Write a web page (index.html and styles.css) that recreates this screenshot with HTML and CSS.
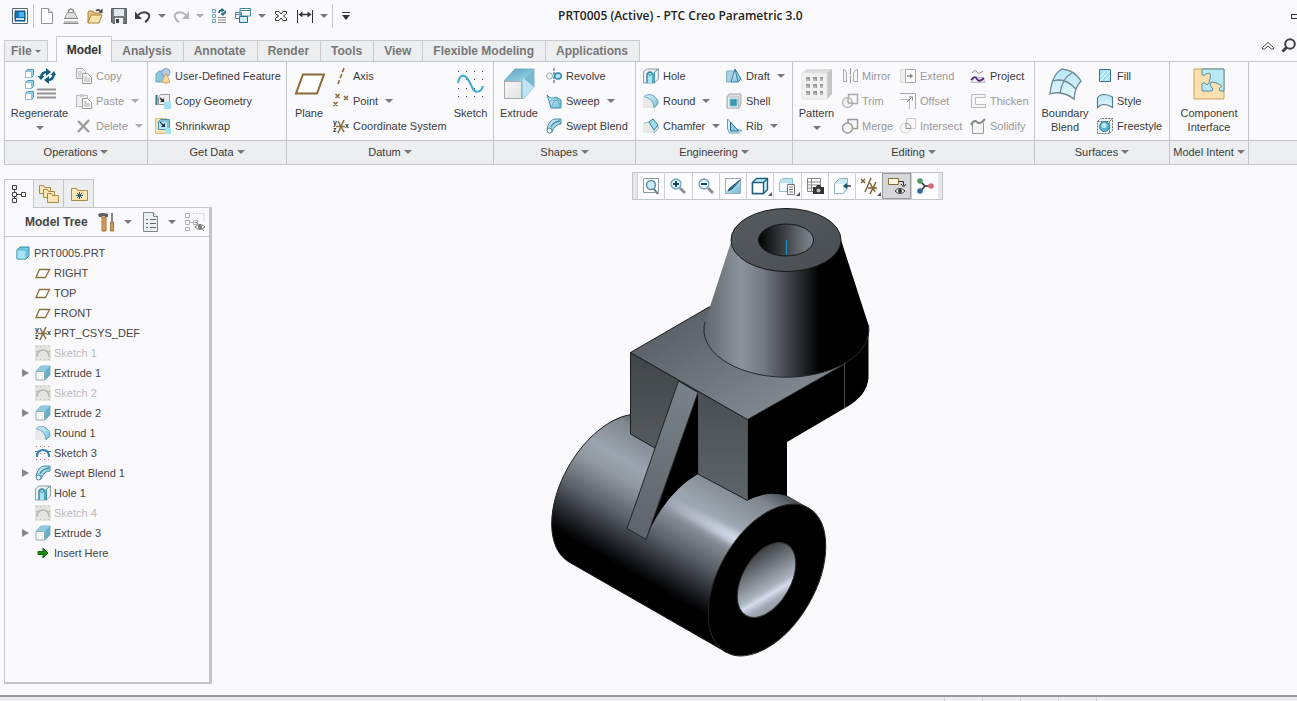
FILE: index.html
```html
<!DOCTYPE html>
<html lang="en">
<head>
    <meta charset="UTF-8">
    <meta name="viewport" content="width=device-width, initial-scale=1.0">
    <title>PRT0005 (Active) - PTC Creo Parametric 3.0</title>
    <link rel="stylesheet" href="styles.css">
</head>
<body>
    <!-- icon sprite -->
    <svg class="sprite" aria-hidden="true">
        <defs>
            <linearGradient id="gBlue" x1="0" y1="0" x2="1" y2="1">
                <stop offset="0" stop-color="#e4f5fb"/><stop offset="1" stop-color="#6cbcd8"/>
            </linearGradient>
            <linearGradient id="gSide" x1="0" y1="0" x2="1" y2="1">
                <stop offset="0" stop-color="#2e86ab"/><stop offset="1" stop-color="#a9dcee"/>
            </linearGradient>
            <linearGradient id="gFace" x1="0" y1="0" x2="1" y2="1">
                <stop offset="0" stop-color="#f8f8f8"/><stop offset="1" stop-color="#e2e2e2"/>
            </linearGradient>
            <linearGradient id="gSky" x1="0" y1="0" x2="0" y2="1">
                <stop offset="0" stop-color="#b5e6f6"/><stop offset="1" stop-color="#e8f8fd"/>
            </linearGradient>
        </defs>
        <!-- quick access -->
        <symbol id="app" viewBox="0 0 16 16"><path d="M.5.5h15v15H.5z" fill="#fff" stroke="#567"/><path d="M3 3h10v10H3z" fill="#1976b5" stroke="#124a72"/><path d="M7 4h5v5H7z" fill="#49b5ef"/><path d="M4 10h8v2H4z" fill="#cde"/></symbol>
        <symbol id="new" viewBox="0 0 16 16"><path d="M2.500.5h7l4 4v11h-11z" fill="#fff" stroke="#8d9398"/><path d="M9.500.5v4h4" fill="#ddd" stroke="#8d9398"/></symbol>
        <symbol id="scale" viewBox="0 0 16 16"><path d="M4.500 4.500h7l3 6h-13z" fill="#ddd" stroke="#999"/><path d="M5.500 4.500v-2q2.500-3 5 0v2" fill="none" stroke="#888" stroke-width="1.500"/><path d="M1 10.500h14M.5 15.500h15M2 13v2M4 13v2M6 13v2M8 13v2M10 13v2M12 13v2M14 13v2" stroke="#888" fill="none"/></symbol>
        <symbol id="open" viewBox="0 0 16 16"><path d="M1 15V4l1-1h4l1 2h6v3" fill="#e9c57c" stroke="#a98440"/><path d="M1 15l3-8h11l-3 8z" fill="#fbe3ad" stroke="#a98440"/><path d="M9 3q2-2 4-.5" fill="none" stroke="#444" stroke-width="1.500"/><path d="M15.500.5v5l-4-1.500z" fill="#444"/></symbol>
        <symbol id="save" viewBox="0 0 16 16"><path d="M.5.5h15v15H2l-1.500-1.500z" fill="#737a80" stroke="#5b6064"/><path d="M3 1h10v7H3z" fill="#dfe9ee"/><path d="M4 10h8v6H4z" fill="#f1f1f1"/><path d="M5 11h3v4H5z" fill="#3d4144"/></symbol>
        <symbol id="undo" viewBox="0 0 16 16"><path d="M3 7q5-4 9-2t1 6q-1 2-3 3" fill="none" stroke="#3c3f43" stroke-width="2"/><path d="M0 3.500V11h7z" fill="#3c3f43"/></symbol>
        <symbol id="redo" viewBox="0 0 16 16"><path d="M13 7q-5-4-9-2t-1 6q1 2 3 3" fill="none" stroke="#b3b5b7" stroke-width="2"/><path d="M16 3.500V11H9z" fill="#b3b5b7"/></symbol>
        <symbol id="regen" viewBox="0 0 16 16"><path d="M1.500 1.500h3v3h-3zM1.500 6.500h3v3h-3zM1.500 11.500h3v3h-3z" fill="#e1f4fa" stroke="#6ba3ba"/><path d="M7 9.500h8M7 12h8M7 14.500h8" stroke="#888"/><path d="M8 5q0-3 3-3M14 2.500q1 3-2 3.500" fill="none" stroke="#176080" stroke-width="1.600"/><path d="M10.500 0v4.500L13.500 2zM12.500 4v4L9.500 6z" fill="#176080"/></symbol>
        <symbol id="windows" viewBox="0 0 16 16"><path d="M5 .5h10.500V8H5zM.5 4.500h6v6h-6z" fill="#fff" stroke="#4489a4"/><path d="M5 2.500h10.500M.5 6.500h6" stroke="#4489a4"/><path d="M4.500 8.500h8v6h-8z" fill="#cfeefa" stroke="#276f91"/></symbol>
        <symbol id="closewin" viewBox="0 0 16 16"><path d="M2.500 3.500h3.500L8 6l2-2.500h3.500v2L10.500 8l3 2.500v2H10L8 10l-2 2.500H2.500v-2l3-2.500-3-2.500z" fill="#fff" stroke="#333"/></symbol>
        <symbol id="measure" viewBox="0 0 16 16"><path d="M.5 2v13M15.500 2v13" stroke="#333"/><path d="M3 6.500h10" stroke="#333" stroke-width="1.500"/><path d="M1.500 6.500l4-3v6zM14.500 6.500l-4-3v6z" fill="#333"/></symbol>
        <symbol id="more" viewBox="0 0 16 16"><path d="M4 4.500h8" stroke="#333"/><path d="M4 7h8l-4 5z" fill="#333"/></symbol>
        <!-- operations -->
        <symbol id="bigRegen" viewBox="0 0 32 32"><g fill="#8fd3e8" stroke="#4c9ab8"><path d="M1.500 3.500l2-2h6v6l-2 2h-6zM1.500 14.500l2-2h6v6l-2 2h-6zM1.500 25.500l2-2h6v6l-2 2h-6z"/><path d="M1.500 3.500h6v6h-6zM1.500 14.500h6v6h-6zM1.500 25.500h6v6h-6z" fill="#fff" stroke="#8cc2d6"/></g><path d="M13 21.500h19M13 25.500h19M13 29.500h19" stroke="#939393" stroke-width="2"/><path d="M17 9q1-5 6-5M30 6q-1 6-6 6" fill="none" stroke="#165e7d" stroke-width="2.500"/><path d="M13.500 8h7L17 12zM26.500 7L30 3l2 4zM22 0l5 4-5 4zM25 8v8l-5-4z" fill="#165e7d"/></symbol>
        <symbol id="copy" viewBox="0 0 16 16"><path d="M.5.5h6l3 3v7h-9z" fill="#f2f2f2" stroke="#aaa"/><path d="M6.500 5.500h5l4 4v6h-9z" fill="#f6f6f6" stroke="#999"/><path d="M2 4h4M2 6h3M2 8h3M8 9h3M8 11h6M8 13h6" stroke="#b5b5b5"/></symbol>
        <symbol id="paste" viewBox="0 0 16 16"><path d="M.5 2.500h11v11H.5z" fill="#eee" stroke="#bbb"/><path d="M4 1h4v3H4z" fill="#ccc"/><path d="M6.500 5.500h5l4 4v6h-9z" fill="#fafafa" stroke="#999"/><path d="M8 9h3M8 11h6M8 13h6" stroke="#aaa"/></symbol>
        <symbol id="delete" viewBox="0 0 16 16"><path d="M2 3l11 11M13 2L2 14" stroke="#9b9b9b" stroke-width="2.400"/></symbol>
        <!-- get data -->
        <symbol id="udf" viewBox="0 0 16 16"><path d="M1 6l3-3h6v8l-3 3H1z" fill="#86c7de" stroke="#6ba9c1"/><circle cx="11" cy="4.500" r="4" fill="#b9ccef" stroke="#7f99ca"/><path d="M11 5l4 9q-4 2.500-8 0z" fill="#f9d69a" stroke="#cba469"/></symbol>
        <symbol id="copygeom" viewBox="0 0 16 16"><path d="M3.500 4.500l2-3h9v7l-3 3h-8z" fill="#eee" stroke="#999"/><path d="M1.500 2v10" stroke="#34758f" stroke-width="2"/><path d="M9 9h7v7H9z" fill="#9fe2f5"/><path d="M5 5l3 3" stroke="#222" stroke-width="1.300"/><path d="M9 5v4H5z" fill="#222"/></symbol>
        <symbol id="shrink" viewBox="0 0 16 16"><path d="M.5.5h11v15H.5z" fill="#f6e3b5" stroke="#d5bd82"/><path d="M3.500 3.500l2-2h9v8l-2 2h-9z" fill="#7fc4dc" stroke="#4a93b1"/><path d="M4 4h8v7H4z" fill="#c5e8f3"/><path d="M10 10h6v6h-6z" fill="#9fe2f5"/><path d="M5 4l4 4" stroke="#12394a" stroke-width="1.300"/><path d="M10 5v4H6z" fill="#12394a"/></symbol>
        <!-- datum -->
        <symbol id="bigPlane" viewBox="0 0 32 32"><path d="M10 6.500h21l-7 19H3z" fill="#fff" stroke="#8a6a37" stroke-width="2"/></symbol>
        <symbol id="plane" viewBox="0 0 16 16"><path d="M4.500 4.500h10l-4 8H1z" fill="#fff" stroke="#8a6f43" stroke-width="1.300"/></symbol>
        <symbol id="axis" viewBox="0 0 16 16"><path d="M11 0L5 16" stroke="#8a6a37" stroke-width="1.600" stroke-dasharray="4.500 2"/></symbol>
        <symbol id="point" viewBox="0 0 16 16"><path d="M2.500 1l4 4M6.500 1l-4 4M11 3l4 4M15 3l-4 4M.5 9l4 4M4.500 9l-4 4" stroke="#8a6a37" stroke-width="1.500"/></symbol>
        <symbol id="csys" viewBox="0 0 16 16"><path d="M3 8.500h9M5 3l6 11M11 2L5 15" stroke="#8a6a37" stroke-width="1.500"/><g font-family="Liberation Sans" font-size="7" font-weight="bold" fill="#333"><text x="0" y="7">y</text><text x="12" y="10">x</text><text x="0" y="14">z</text></g></symbol>
        <symbol id="bigSketch" viewBox="0 0 32 32"><path d="M3 3.500h26M3 11.500h26M3 20.500h26M3 28.500h26" stroke="#555" stroke-dasharray="1 7"/><path d="M3 15c1-7 5-9 8-6s5 8 7 12 8 4 10-3" fill="none" stroke="#3ea9cf" stroke-width="2"/></symbol>
        <symbol id="sketch" viewBox="0 0 16 16"><path d="M1 1.500h15M1 14.500h15M1 8.500h15" stroke="#c77" stroke-dasharray="1 3"/><path d="M2 12q0-7 6-7t6 7" fill="none" stroke="#2f86b5" stroke-width="2"/><path d="M0 6.500h5M11 6.500h5" stroke="#2f86b5"/></symbol>
        <symbol id="sketchOff" viewBox="0 0 16 16"><path d="M0 0h16v16H0z" fill="#e4e4e0"/><path d="M1 1.500h15M1 14.500h15" stroke="#bbb" stroke-dasharray="1 3"/><path d="M2 12q0-7 6-7t6 7M1 6.500h4M11 6.500h4" fill="none" stroke="#b9b9b4" stroke-width="1.500"/></symbol>
        <!-- shapes -->
        <symbol id="bigExtrude" viewBox="0 0 32 32"><path d="M1 13L12 1h19v18L20 31z" fill="url(#gBlue)" stroke="#83b6c9"/><path d="M12 1h19L20 13H1z" fill="url(#gSide)" opacity=".75"/><path d="M31 1v18L20 31V13z" fill="#78b7d0"/><path d="M31 19L20 10v21z" fill="#c1e4f0"/><path d="M1.500 13.500h17v17h-17z" fill="url(#gFace)" stroke="#aaa"/></symbol>
        <symbol id="extrude" viewBox="0 0 16 16"><path d="M1 6l5-5h9v9l-5 5z" fill="url(#gBlue)" stroke="#7fb3c6"/><path d="M6 1h9l-5 5H1z" fill="#8ccbe0"/><path d="M15 1v9l-5 5V6z" fill="#69aecb"/><path d="M1 6.500h8.500V15H1z" fill="#f7f7f7" stroke="#8faab5"/></symbol>
        <symbol id="revolve" viewBox="0 0 16 16"><path d="M8 0v16" stroke="#444" stroke-dasharray="3 1"/><ellipse cx="3.500" cy="8" rx="3" ry="3" fill="#fff" stroke="#8aa"/><ellipse cx="12" cy="8" rx="3.300" ry="3" fill="#a9e1f3" stroke="#2f86ab" stroke-width="1.400"/></symbol>
        <symbol id="sweep" viewBox="0 0 16 16"><path d="M1 2q4 5 9 2l5 3v8H5L3 8z" fill="url(#gBlue)" stroke="#3a8cab"/><path d="M5 15l5-11 5 11M3 8l12-1" fill="none" stroke="#6fb2ca"/></symbol>
        <symbol id="swept" viewBox="0 0 16 16"><path d="M1 11Q3 2 9 1h6v5q-6 0-9 8z" fill="url(#gBlue)" stroke="#4a8ba6"/><path d="M5 9q2-5 9-6" fill="none" stroke="#4a93b1" stroke-width="1.500"/><circle cx="3.500" cy="12.500" r="2.500" fill="#dff4fb" stroke="#4a7d94"/></symbol>
        <!-- engineering -->
        <symbol id="hole" viewBox="0 0 16 16"><path d="M.5 4l3-3h12v10l-4 4H.5z" fill="#eee" stroke="#8aa0aa"/><path d="M4 15V6q3-4 6 0v9" fill="#a8e2f3" stroke="#2c829f" stroke-width="1.300"/><path d="M4 6q3 3 6 0M11.500 15V4l4-3" fill="none" stroke="#4590aa"/></symbol>
        <symbol id="round" viewBox="0 0 16 16"><path d="M0 4h8l3 5v6H0z" fill="#e9e9e9"/><path d="M1 3.500Q6 0 11 3t4 8l-4 4Q11 6 1 3.500z" fill="url(#gBlue)" stroke="#6aabc3"/></symbol>
        <symbol id="chamfer" viewBox="0 0 16 16"><path d="M0 5h6l5 5v5H0z" fill="#e9e9e9"/><path d="M1 5l5-1M11 12v3l4-4V7" fill="#cfe6ee" stroke="#8fb6c4"/><path d="M6 4l4-3 5 6-4 5z" fill="#a3dced" stroke="#2e83a3"/></symbol>
        <symbol id="draft" viewBox="0 0 16 16"><path d="M.5 14V3h8l-3 11z" fill="#a5d0df" stroke="#84b2c3"/><path d="M9 1l6 10-3 3H5z" fill="url(#gBlue)" stroke="#3582a1"/><path d="M9 1l3 13" stroke="#3582a1"/></symbol>
        <symbol id="shell" viewBox="0 0 16 16"><path d="M1 4l2-3h12v10l-2 4H1z" fill="#ddd" stroke="#aaa"/><path d="M1.500 4h11v11h-11z" fill="#eee" stroke="#bbb"/><path d="M4 6h7v7H4z" fill="#3f93ad" stroke="#6fc6df"/></symbol>
        <symbol id="rib" viewBox="0 0 16 16"><path d="M1.500 11V1l3 3v6l5 2h6l-3 3h-9z" fill="#dff1f7" stroke="#5d9fb8"/><path d="M4.500 4l8 9h-8z" fill="#8ccbe0" stroke="#22698a"/></symbol>
        <!-- editing -->
        <symbol id="bigPattern" viewBox="0 0 32 32"><path d="M1 5l5-4h25v25l-5 5H1z" fill="#dcdcdc"/><path d="M26 5l5-4v25l-5 5z" fill="#c4c4c4"/><path d="M1 5h25v26H1z" fill="#f1f1f1" stroke="#e4e4e4"/><path d="M5 11h17M5 18h17M5 25h17" stroke="#999" stroke-width="4" stroke-dasharray="4 3"/><path d="M5 12h17M5 19h17M5 26h17" stroke="#bbb" stroke-width="2" stroke-dasharray="3 4"/></symbol>
        <symbol id="mirror" viewBox="0 0 16 16"><path d="M8.500 0v16" stroke="#999" stroke-dasharray="7 1"/><path d="M1.500 1.500v12h3V5Q4 2 1.500 1.500zM15.500 1.500v12h-4V5q1-3 4-3.500z" fill="#f8f8f8" stroke="#aaa"/></symbol>
        <symbol id="trim" viewBox="0 0 16 16"><path d="M6.500 1.500h9v9h-9z" fill="none" stroke="#aaa" stroke-width="1.400"/><circle cx="5.500" cy="9.500" r="5" fill="#eee" fill-opacity=".7" stroke="#bbb" stroke-width="1.400"/><path d="M6 5v5h5" fill="none" stroke="#999"/></symbol>
        <symbol id="merge" viewBox="0 0 16 16"><path d="M6 10.500V1.500h9.500v9H10" fill="none" stroke="#999" stroke-width="1.400"/><circle cx="5.500" cy="10" r="5" fill="#f4f4f4" stroke="#999" stroke-width="1.400"/></symbol>
        <symbol id="extend" viewBox="0 0 16 16"><path d="M.5 1.500h5v13h-5z" fill="#eee" stroke="#ddd"/><path d="M5.500 1.500h10v13h-10z" fill="#fafafa" stroke="#aaa"/><path d="M7 8h4" stroke="#888" stroke-width="1.400"/><path d="M10 5.500v5l3-2.500z" fill="#888"/></symbol>
        <symbol id="offset" viewBox="0 0 16 16"><path d="M0 .5h15.500V16" fill="none" stroke="#aaa"/><path d="M0 6.500h9.500V16" fill="none" stroke="#bbb"/><path d="M7 9l5-5M9 4h3.500v3.500" fill="none" stroke="#888"/></symbol>
        <symbol id="intersect" viewBox="0 0 16 16"><path d="M6.500.5h9v10h-9z" fill="none" stroke="#ccc"/><circle cx="5.500" cy="10" r="5" fill="#f8f8f8" stroke="#ccc"/><path d="M6 5q5 1 5 5.500H6z" fill="#eee" stroke="#999"/></symbol>
        <symbol id="project" viewBox="0 0 16 16"><path d="M2 5q3-4 5-1t6-1" fill="none" stroke="#888"/><path d="M1 14.500h14l-2-5H4z" fill="#eee" stroke="#bbb"/><path d="M1 12q4-5 6-1t7-1" fill="none" stroke="#5b2c8e" stroke-width="1.800"/></symbol>
        <symbol id="thicken" viewBox="0 0 16 16"><path d="M1.500 1.500h14v3h-10v7h10v3h-14z" fill="#f6f6f6" stroke="#bbb"/></symbol>
        <symbol id="solidify" viewBox="0 0 16 16"><path d="M2.500 5.500v10h11v-11" fill="#f4f4f4" stroke="#999"/><path d="M1 7q3-6 6-3t8-3" fill="none" stroke="#888" stroke-width="2"/></symbol>
        <!-- surfaces -->
        <symbol id="bigBlend" viewBox="0 0 32 32"><path d="M1 26Q3 6 13 1q12 1 19 12-6 6-7 18-12-9-24-5z" fill="url(#gSky)" stroke="#6d8893" stroke-width="1.300"/><path d="M11 26Q13 10 23 5M4 13q12-4 23 8" fill="none" stroke="#6d8893" stroke-width="1.300"/></symbol>
        <symbol id="fill" viewBox="0 0 16 16"><path d="M2.500 1.500h11v12h-11z" fill="#a5e3f6" stroke="#3c6f88"/><path d="M3 9l6-6M3 13L13 3M8 13l5-5" stroke="#e4f8fd"/></symbol>
        <symbol id="style" viewBox="0 0 16 16"><path d="M.5 14.500V5q2-3.500 6.500-3.500T15.500 4v10.500Q11 11.500 7 11.500T.5 14.500z" fill="url(#gSky)" stroke="#527f92" stroke-width="1.200"/></symbol>
        <symbol id="freestyle" viewBox="0 0 16 16"><path d="M.5 3.500h12v12H.5zM.5 3.500l3-3h12v12l-3 3M12.500 3.500l3-3" fill="#eef8fb" stroke="#666" stroke-dasharray="2 1"/><circle cx="7.500" cy="8.500" r="5" fill="#5ab6d3" stroke="#2c829f"/><circle cx="7" cy="7.500" r="2.500" fill="#c9eefa"/></symbol>
        <symbol id="bigComp" viewBox="0 0 32 32"><path d="M1 1h30v30H1z" fill="#fbe1b0" stroke="#c9a161"/><path d="M9 1H31V23H27Q25 20 28 19T23 15 18 19Q21 20 19 23H9V16Q11 13 13 16T17 11 13 6Q12 8 9 7z" fill="#b9e8f7" stroke="#5c8a9c"/></symbol>
        <!-- tree -->
        <symbol id="part" viewBox="0 0 16 16"><path d="M2 5l3-3h9v9l-3 3H2z" fill="#6fcbe6" stroke="#3c8ba7"/><path d="M2 5h9v9H2z" fill="#a5e5f7" stroke="#5fb0ca"/></symbol>
        <symbol id="insert" viewBox="0 0 16 16"><path d="M3 6.500h5V3l5 5-5 5V9.500H3z" fill="#1b8a12" stroke="#136a0c"/></symbol>
        <symbol id="treeTab" viewBox="0 0 20 20"><path d="M3.500 1.500h4v4h-4zM3.500 8.500h4v4h-4zM12.500 8.500h4v4h-4zM3.500 14.500h4v4h-4zM5.500 5.500v3M5.500 12.500v2M7.500 10.500h5" fill="#fff" stroke="#444"/></symbol>
        <symbol id="folders" viewBox="0 0 20 20"><g fill="#fbe6b5" stroke="#ab8a48"><path d="M.5 9.500v-8h4l1 2h6v6z"/><path d="M4.500 13.500v-8h4l1 2h6v6z"/><path d="M8.500 18.500v-9h4l1 2h6v7z"/></g></symbol>
        <symbol id="favs" viewBox="0 0 20 20"><path d="M2.500 16.500v-12h5l1 2h10v10z" fill="#fbe6b5" stroke="#ab8a48"/><path d="M10.500 8v7M7 11.500h7M8 9l5 5M13 9l-5 5" stroke="#235f7d"/></symbol>
        <symbol id="tools" viewBox="0 0 20 20"><path d="M1 2q5-2 10 0v3H8V4H5v1H2z" fill="#5c6166"/><path d="M5 5h4v14H5z" fill="#d69b5a" stroke="#a5743f"/><path d="M15 1v9" stroke="#888" stroke-width="2"/><path d="M13.500 10h3v9h-3z" fill="#d69b5a" stroke="#a5743f"/></symbol>
        <symbol id="settings" viewBox="0 0 20 20"><path d="M2.500.5h10l4 4v15h-14z" fill="#eaf1f4" stroke="#7d8b93"/><path d="M12.500.5v4h4" fill="#fff" stroke="#7d8b93"/><path d="M5 7.500h2M5 11.500h2M5 15.500h2M9 7.500h6M9 11.500h6M9 15.500h6" stroke="#666"/></symbol>
        <symbol id="filter" viewBox="0 0 20 20"><path d="M.5 1.500h4v4h-4zM.5 8.500h4v4h-4zM.5 15.500h4v3h-4zM4.500 10.500h7M8.500 8.500h4v4h-4z" fill="#fff" stroke="#b5b5b5"/><path d="M8 1.500h11v8" fill="none" stroke="#ccc" stroke-dasharray="2 1"/><path d="M10 15q5-5 10 0-5 5-10 0zM11 10l8 9" fill="none" stroke="#777"/><circle cx="15" cy="15" r="2" fill="#777"/></symbol>
        <!-- view toolbar -->
        <symbol id="refit" viewBox="0 0 18 18"><path d="M1.500 1.500h15v14h-15z" fill="#fff" stroke="#8d9aa2"/><circle cx="9" cy="8" r="4.500" fill="#c6edf9" stroke="#5a8da5" stroke-width="1.400"/><path d="M12 12l4 5" stroke="#67747b" stroke-width="2"/></symbol>
        <symbol id="zoomin" viewBox="0 0 18 18"><circle cx="7" cy="7" r="5" fill="#e4f6fc" stroke="#6ba3bd" stroke-width="1.300"/><path d="M4 7h6M7 4v6" stroke="#114a6b" stroke-width="2"/><path d="M11 11l5 5" stroke="#8b8f92" stroke-width="3"/></symbol>
        <symbol id="zoomout" viewBox="0 0 18 18"><circle cx="7" cy="7" r="5" fill="#e4f6fc" stroke="#6ba3bd" stroke-width="1.300"/><path d="M4 7h6" stroke="#114a6b" stroke-width="2"/><path d="M11 11l5 5" stroke="#8b8f92" stroke-width="3"/></symbol>
        <symbol id="repaint" viewBox="0 0 18 18"><path d="M1.500 1.500h15v15h-15z" fill="url(#gBlue)" stroke="#9ab"/><path d="M2 2h14L8 11l-6 3z" fill="#fff"/><path d="M16 3L8 12l-4 2 2-3z" fill="#276f91" stroke="#22516a"/></symbol>
        <symbol id="shading" viewBox="0 0 18 18"><path d="M1.500 5.500l4-4h11v11l-4 4h-11z" fill="#c9eefa" stroke="#1c5f7e" stroke-width="1.400"/><path d="M1.500 5.500h11v11h-11zM12.500 5.500l4-4" fill="#fff" stroke="#1c5f7e" stroke-width="1.400"/></symbol>
        <symbol id="saved" viewBox="0 0 18 18"><path d="M1.500 5.500l3-4h10v9l-4 4h-9z" fill="#b9e3f1" stroke="#8fbccb"/><path d="M2 6h8v8H2z" fill="#f4fbfd"/><path d="M9.500 7.500h7v10h-7z" fill="#fff" stroke="#777"/><path d="M11 10h4M11 12.500h4M11 15h4" stroke="#777"/></symbol>
        <symbol id="viewmgr" viewBox="0 0 18 18"><path d="M1.500 1.500h13v13h-13zM1.500 5h13M1.500 8h13M1.500 11h13M5.500 1.500v13" fill="#fff" stroke="#888"/><path d="M7 10h3l1-2h3l1 2h3v7H7z" fill="#333"/><circle cx="12.500" cy="13.500" r="2" fill="#bbb"/></symbol>
        <symbol id="persp" viewBox="0 0 18 18"><path d="M1.500 6.500l5-5h8v10l-4 5h-9z" fill="#cdeaf4" stroke="#93aeb9"/><path d="M2 7h8v9H2z" fill="#fff"/><path d="M12 9h6" stroke="#333" stroke-width="1.500"/><path d="M10 9l4-3v6z" fill="#14516f"/></symbol>
        <symbol id="datums" viewBox="0 0 18 18"><path d="M1 2l4 4M5 2L1 6M11 1L5 15M10 6l5 9M16 5l-6 12M8 11h9" stroke="#7d5d2c" stroke-width="1.400"/></symbol>
        <symbol id="annot" viewBox="0 0 18 18"><path d="M.5 1.500h10v6H.5z" fill="#fff8e0" stroke="#8a6a37"/><path d="M11 4.500h4.500v4M13 7l2.500 3L18 7" fill="none" stroke="#333"/><path d="M7 14q5-5 10 0-5 5-10 0z" fill="#fff" stroke="#333"/><circle cx="12" cy="14" r="2" fill="#333"/></symbol>
        <symbol id="spin" viewBox="0 0 18 18"><path d="M4 4l5 5 6 0M9 9l-5 6" fill="none" stroke="#333" stroke-width="1.600"/><circle cx="4" cy="4" r="2.800" fill="#4e9c63"/><circle cx="15" cy="9" r="2.800" fill="#d76770"/><circle cx="4" cy="14" r="2.800" fill="#33699b"/></symbol>
        <symbol id="chevron" viewBox="0 0 16 16"><path d="M2.500 9.500L8 4.500l5.500 5v1.500h-2L8 8l-3.500 3h-2z" fill="#fff" stroke="#444"/></symbol>
        <symbol id="search" viewBox="0 0 16 16"><circle cx="9" cy="6" r="4.800" fill="none" stroke="#3c3f43" stroke-width="2"/><path d="M5.500 9.500l-4 4" stroke="#3c3f43" stroke-width="3"/></symbol>
    </svg>

    <header class="titlebar">
        <div class="quick">
            <button aria-label="Application"><svg><use href="#app"/></svg></button>
            <span class="sep"></span>
            <button aria-label="New"><svg><use href="#new"/></svg></button>
            <button aria-label="Model properties"><svg><use href="#scale"/></svg></button>
            <button aria-label="Open"><svg><use href="#open"/></svg></button>
            <button aria-label="Save"><svg><use href="#save"/></svg></button>
            <button aria-label="Undo"><svg><use href="#undo"/></svg></button>
            <button class="drop" aria-label="Undo list"><i class="caret"></i></button>
            <button aria-label="Redo"><svg><use href="#redo"/></svg></button>
            <button class="drop" aria-label="Redo list"><i class="caret light"></i></button>
            <button aria-label="Regenerate"><svg><use href="#regen"/></svg></button>
            <button aria-label="Windows"><svg><use href="#windows"/></svg></button>
            <button class="drop" aria-label="Window list"><i class="caret"></i></button>
            <button aria-label="Close"><svg><use href="#closewin"/></svg></button>
            <button aria-label="Measure"><svg><use href="#measure"/></svg></button>
            <button class="drop" aria-label="Measure types"><i class="caret"></i></button>
            <span class="sep"></span>
            <button aria-label="Customize"><svg><use href="#more"/></svg></button>
        </div>
        <h1>PRT0005 (Active) - PTC Creo Parametric 3.0</h1>
        <button class="minimize" aria-label="Minimize"></button>
    </header>

    <nav class="tabs">
        <button class="file">File<i class="caret"></i></button>
        <button class="active">Model</button>
        <button>Analysis</button>
        <button>Annotate</button>
        <button>Render</button>
        <button>Tools</button>
        <button>View</button>
        <button>Flexible Modeling</button>
        <button>Applications</button>
        <div class="tab-tools">
            <button aria-label="Minimize ribbon"><svg><use href="#chevron"/></svg></button>
            <button aria-label="Search"><svg><use href="#search"/></svg></button>
        </div>
    </nav>

    <div class="ribbon">
        <section class="group operations">
            <div class="group-body">
                <button class="big"><svg><use href="#bigRegen"/></svg>Regenerate<i class="caret"></i></button>
                <div class="cmds">
                    <button disabled><svg><use href="#copy"/></svg>Copy</button>
                    <button disabled><svg><use href="#paste"/></svg>Paste<i class="caret"></i></button>
                    <button disabled><svg><use href="#delete"/></svg>Delete<i class="caret"></i></button>
                </div>
            </div>
            <button class="group-name">Operations<i class="caret"></i></button>
        </section>
        <section class="group getdata">
            <div class="group-body">
                <div class="cmds">
                    <button><svg><use href="#udf"/></svg>User-Defined Feature</button>
                    <button><svg><use href="#copygeom"/></svg>Copy Geometry</button>
                    <button><svg><use href="#shrink"/></svg>Shrinkwrap</button>
                </div>
            </div>
            <button class="group-name">Get Data<i class="caret"></i></button>
        </section>
        <section class="group datum">
            <div class="group-body">
                <button class="big"><svg><use href="#bigPlane"/></svg>Plane</button>
                <div class="cmds">
                    <button><svg><use href="#axis"/></svg>Axis</button>
                    <button><svg><use href="#point"/></svg>Point<i class="caret"></i></button>
                    <button><svg><use href="#csys"/></svg>Coordinate System</button>
                </div>
                <button class="big"><svg><use href="#bigSketch"/></svg>Sketch</button>
            </div>
            <button class="group-name">Datum<i class="caret"></i></button>
        </section>
        <section class="group shapes">
            <div class="group-body">
                <button class="big"><svg><use href="#bigExtrude"/></svg>Extrude</button>
                <div class="cmds">
                    <button><svg><use href="#revolve"/></svg>Revolve</button>
                    <button><svg><use href="#sweep"/></svg>Sweep<i class="caret"></i></button>
                    <button><svg><use href="#swept"/></svg>Swept Blend</button>
                </div>
            </div>
            <button class="group-name">Shapes<i class="caret"></i></button>
        </section>
        <section class="group engineering">
            <div class="group-body">
                <div class="cmds">
                    <button><svg><use href="#hole"/></svg>Hole</button>
                    <button><svg><use href="#round"/></svg>Round<i class="caret"></i></button>
                    <button><svg><use href="#chamfer"/></svg>Chamfer<i class="caret"></i></button>
                </div>
                <div class="cmds">
                    <button><svg><use href="#draft"/></svg>Draft<i class="caret"></i></button>
                    <button><svg><use href="#shell"/></svg>Shell</button>
                    <button><svg><use href="#rib"/></svg>Rib<i class="caret"></i></button>
                </div>
            </div>
            <button class="group-name">Engineering<i class="caret"></i></button>
        </section>
        <section class="group editing">
            <div class="group-body">
                <button class="big"><svg><use href="#bigPattern"/></svg>Pattern<i class="caret"></i></button>
                <div class="cmds">
                    <button disabled><svg><use href="#mirror"/></svg>Mirror</button>
                    <button disabled><svg><use href="#trim"/></svg>Trim</button>
                    <button disabled><svg><use href="#merge"/></svg>Merge</button>
                </div>
                <div class="cmds">
                    <button disabled><svg><use href="#extend"/></svg>Extend</button>
                    <button disabled><svg><use href="#offset"/></svg>Offset</button>
                    <button disabled><svg><use href="#intersect"/></svg>Intersect</button>
                </div>
                <div class="cmds">
                    <button><svg><use href="#project"/></svg>Project</button>
                    <button disabled><svg><use href="#thicken"/></svg>Thicken</button>
                    <button disabled><svg><use href="#solidify"/></svg>Solidify</button>
                </div>
            </div>
            <button class="group-name">Editing<i class="caret"></i></button>
        </section>
        <section class="group surfaces">
            <div class="group-body">
                <button class="big"><svg><use href="#bigBlend"/></svg>Boundary<br>Blend</button>
                <div class="cmds">
                    <button><svg><use href="#fill"/></svg>Fill</button>
                    <button><svg><use href="#style"/></svg>Style</button>
                    <button><svg><use href="#freestyle"/></svg>Freestyle</button>
                </div>
            </div>
            <button class="group-name">Surfaces<i class="caret"></i></button>
        </section>
        <section class="group intent">
            <div class="group-body">
                <button class="big"><svg><use href="#bigComp"/></svg>Component<br>Interface</button>
            </div>
            <button class="group-name">Model Intent<i class="caret"></i></button>
        </section>
        <div class="group rest">
            <div class="group-body"></div>
            <div class="group-name"></div>
        </div>
    </div>

    <main class="workspace">
        <aside class="navigator">
            <div class="nav-tabs">
                <button class="active" aria-label="Model Tree"><svg><use href="#treeTab"/></svg></button>
                <button aria-label="Folder Browser"><svg><use href="#folders"/></svg></button>
                <button aria-label="Favorites"><svg><use href="#favs"/></svg></button>
            </div>
            <div class="panel">
                <div class="panel-head">
                    <h2>Model Tree</h2>
                    <button aria-label="Tools"><svg><use href="#tools"/></svg><i class="caret"></i></button>
                    <button aria-label="Settings"><svg><use href="#settings"/></svg><i class="caret"></i></button>
                    <button aria-label="Filter" disabled><svg><use href="#filter"/></svg></button>
                </div>
                <ul class="tree">
                    <li class="root"><svg><use href="#part"/></svg>PRT0005.PRT</li>
                    <li><svg><use href="#plane"/></svg>RIGHT</li>
                    <li><svg><use href="#plane"/></svg>TOP</li>
                    <li><svg><use href="#plane"/></svg>FRONT</li>
                    <li><svg><use href="#csys"/></svg>PRT_CSYS_DEF</li>
                    <li class="hidden"><svg><use href="#sketchOff"/></svg>Sketch 1</li>
                    <li class="parent"><svg><use href="#extrude"/></svg>Extrude 1</li>
                    <li class="hidden"><svg><use href="#sketchOff"/></svg>Sketch 2</li>
                    <li class="parent"><svg><use href="#extrude"/></svg>Extrude 2</li>
                    <li><svg><use href="#round"/></svg>Round 1</li>
                    <li><svg><use href="#sketch"/></svg>Sketch 3</li>
                    <li class="parent"><svg><use href="#swept"/></svg>Swept Blend 1</li>
                    <li><svg><use href="#hole"/></svg>Hole 1</li>
                    <li class="hidden"><svg><use href="#sketchOff"/></svg>Sketch 4</li>
                    <li class="parent"><svg><use href="#extrude"/></svg>Extrude 3</li>
                    <li><svg><use href="#insert"/></svg>Insert Here</li>
                </ul>
            </div>
        </aside>

        <div class="viewport">
            <div class="view-tools">
                <button aria-label="Refit"><svg><use href="#refit"/></svg></button>
                <button aria-label="Zoom In"><svg><use href="#zoomin"/></svg></button>
                <button aria-label="Zoom Out"><svg><use href="#zoomout"/></svg></button>
                <button aria-label="Repaint"><svg><use href="#repaint"/></svg></button>
                <button class="more" aria-label="Display Style"><svg><use href="#shading"/></svg></button>
                <button class="more" aria-label="Saved Orientations"><svg><use href="#saved"/></svg></button>
                <button aria-label="View Manager"><svg><use href="#viewmgr"/></svg></button>
                <button aria-label="Perspective"><svg><use href="#persp"/></svg></button>
                <button class="more" aria-label="Datum Display"><svg><use href="#datums"/></svg></button>
                <button class="pressed" aria-label="Annotation Display"><svg><use href="#annot"/></svg></button>
                <button aria-label="Spin Center"><svg><use href="#spin"/></svg></button>
            </div>
            <svg class="part" viewBox="540 200 340 470" role="img" aria-label="Part model">
                <defs>
                    <linearGradient id="cone" gradientUnits="userSpaceOnUse" x1="704" y1="0" x2="869" y2="0">
                        <stop offset="0" stop-color="#60676d"/><stop offset=".22" stop-color="#8b939c"/>
                        <stop offset=".36" stop-color="#727980"/><stop offset=".52" stop-color="#3d4145"/>
                        <stop offset=".7" stop-color="#000"/><stop offset="1" stop-color="#000"/>
                    </linearGradient>
                    <linearGradient id="bore" gradientUnits="userSpaceOnUse" x1="758" y1="0" x2="814" y2="0">
                        <stop offset="0" stop-color="#000"/><stop offset=".3" stop-color="#26292c"/>
                        <stop offset="1" stop-color="#838b93"/>
                    </linearGradient>
                    <linearGradient id="ring" x1="0" y1="0" x2="1" y2="1">
                        <stop offset="0" stop-color="#565b60"/><stop offset="1" stop-color="#4a4e52"/>
                    </linearGradient>
                    <linearGradient id="top" gradientUnits="userSpaceOnUse" x1="690" y1="310" x2="750" y2="420">
                        <stop offset="0" stop-color="#596066"/><stop offset="1" stop-color="#80888f"/>
                    </linearGradient>
                    <linearGradient id="front" gradientUnits="userSpaceOnUse" x1="690" y1="360" x2="690" y2="500">
                        <stop offset="0" stop-color="#43474a"/><stop offset="1" stop-color="#5f656a"/>
                    </linearGradient>
                    <linearGradient id="strip" gradientUnits="userSpaceOnUse" x1="690" y1="385" x2="637" y2="535">
                        <stop offset="0" stop-color="#79828a"/><stop offset="1" stop-color="#5d646a"/>
                    </linearGradient>
                    <linearGradient id="barrel" gradientUnits="userSpaceOnUse" x1="808" y1="508" x2="725" y2="652">
                        <stop offset="0" stop-color="#4a4f54"/><stop offset=".1" stop-color="#7e868e"/>
                        <stop offset=".3" stop-color="#9ba5af"/><stop offset=".4" stop-color="#929ba4"/>
                        <stop offset=".6" stop-color="#596067"/><stop offset=".8" stop-color="#14161a"/>
                        <stop offset=".87" stop-color="#000"/>
                    </linearGradient>
                    <linearGradient id="shine" gradientUnits="userSpaceOnUse" x1="655" y1="490" x2="740" y2="540">
                        <stop offset="0" stop-color="#d6deee" stop-opacity="0"/><stop offset="1" stop-color="#d6deee"/>
                    </linearGradient>
                    <linearGradient id="eye" gradientUnits="userSpaceOnUse" x1="787" y1="544" x2="746" y2="616">
                        <stop offset="0" stop-color="#17191b"/><stop offset=".3" stop-color="#5f656b"/>
                        <stop offset=".6" stop-color="#aab2bc"/><stop offset=".67" stop-color="#d5dcec"/>
                        <stop offset=".76" stop-color="#a2abb5"/><stop offset="1" stop-color="#7a828a"/>
                    </linearGradient>
                    <filter id="soft" x="-20%" y="-20%" width="140%" height="140%"><feGaussianBlur stdDeviation="3"/></filter>
                    <clipPath id="body"><path d="M652 418L809 508 726 652 569 562A83 48 -60 0 1 652 418z"/></clipPath>
                </defs>
                <!-- lower cylinder -->
                <path d="M652 418L809 508 726 652 569 562A83 48 -60 0 1 652 418z" fill="url(#barrel)"/>
                <path d="M652 418A83 48 -60 0 0 569 562L726 652" fill="none" stroke="#1a1c1e"/>
                <path d="M655 488L745 536 738 548 655 500z" fill="url(#shine)" filter="url(#soft)" clip-path="url(#body)"/>
                <ellipse cx="767" cy="580" rx="83" ry="48" transform="rotate(-60 767 580)" stroke="#222"/>
                <ellipse cx="766.500" cy="580" rx="41" ry="24" transform="rotate(-60 766.500 580)" fill="url(#eye)" stroke="#333"/>
                <!-- block -->
                <path d="M630.500 352.500L747.500 419.500V500.500L698 474 655 448 630.500 434z" fill="url(#front)" stroke="#1a1c1e"/>
                <path d="M747.500 419.500L845 364 868.500 325V378Q867 396 845 408L787 442V496Q768 490 747.500 500.500z"/>
                <path d="M709 307L630.500 352.500 747.500 419.500 845 364 780 300z" fill="url(#top)" stroke="#1a1c1e"/>
                <path d="M844.500 364V408" stroke="#4c4c4c"/>
                <path d="M698 392V474Q670 490 651 527L646 540z"/>
                <path d="M678.500 381L698 392.500 646 539.500 627 528.500z" fill="url(#strip)" stroke="#222"/>
                <path d="M698.500 393V474M747.500 420V500" stroke="#4c5054"/>
                <!-- cone -->
                <path d="M731 242L705 322A82.500 47.500 0 1 0 868.500 325L841 240z" fill="url(#cone)"/>
                <path d="M705 322A82.500 47.500 0 1 0 868.500 325" fill="none" stroke="#25282b"/>
                <ellipse cx="786" cy="240" rx="55" ry="31.500" fill="url(#ring)" stroke="#16181a"/>
                <ellipse cx="786" cy="240" rx="27.500" ry="16" fill="url(#bore)" stroke="#16181a"/>
                <path d="M786.500 240V255" stroke="#1b93cd"/>
            </svg>
        </div>
    </main>

    <footer class="status">
        <span></span><span></span><span></span><span></span><span></span>
    </footer>
</body>
</html>
```
FILE: styles.css
```css
* {
    box-sizing: border-box;
}

body {
    margin: 0;
    height: 100vh;
    display: flex;
    flex-direction: column;
    overflow: hidden;
    background-color: #fafafd;
    color: #3a3a3a;
    font-family: "Liberation Sans", Arial, sans-serif;
    font-size: 11px;
    line-height: 14px;
}

button {
    font: inherit;
    color: inherit;
    background: none;
    border: 0;
    padding: 0;
    display: flex;
    align-items: center;
}
button:disabled {
    color: #999;
}

svg {
    width: 16px;
    height: 16px;
    flex: none;
    fill: none;
    overflow: visible;
}
symbol {
    overflow: visible;
}
svg.sprite {
    position: absolute;
    width: 0;
    height: 0;
}

.caret {
    border: 4px solid transparent;
    border-top-color: #777;
    border-bottom: 0;
}
.caret.light,
button:disabled .caret {
    border-top-color: #aaa;
}

/* title bar */
.titlebar {
    display: flex;
    align-items: center;
    height: 36px;
    padding: 0 0 4px 8px;
    flex: none;
}
.quick {
    display: flex;
    align-items: center;
}
.quick button {
    width: 24px;
    height: 24px;
    justify-content: center;
}
.quick .drop {
    width: 14px;
}
.sep {
    width: 1px;
    height: 24px;
    margin: 0 1px;
    background-color: #c4c5c8;
}
h1 {
    margin: 0 auto 0 200px;
    font-family: "Open Sans", sans-serif;
    font-size: 12px;
    font-weight: 600;
    color: #222;
}
.minimize {
    width: 6px;
    height: 5px;
    border: 1px solid #333;
    border-right: 0;
}

/* tabs */
.tabs {
    display: flex;
    align-items: flex-end;
    height: 25px;
    padding-left: 4px;
    flex: none;
    font-size: 12px;
    font-weight: bold;
    color: #777;
}
.tabs > button {
    height: 21px;
    padding: 0 10px;
    background-color: #eceef0;
    border: 1px solid #c9cacd;
    border-width: 1px 1px 0 0;
}
.tabs > .file {
    padding: 0 6px;
    margin-right: 8px;
    border-left-width: 1px;
}
.file .caret {
    border-width: 3px 3px 0;
    margin-left: 3px;
}
.tabs > .active {
    height: 26px;
    margin-bottom: -1px;
    border-left-width: 1px;
    background-color: #fafafd;
    color: #333;
    z-index: 1;
}
.tabs > .active ~ button {
    padding-right: 11px;
}
.tab-tools {
    display: flex;
    gap: 5px;
    align-self: center;
    margin-left: auto;
    padding-bottom: 6px;
}

/* ribbon */
.ribbon {
    display: flex;
    flex: none;
    margin-left: 4px;
    border: 1px solid #c4c5c8;
    border-right: 0;
}
.group {
    border-right: 1px solid #c4c5c8;
}
.group-body {
    display: grid;
    height: 78px;
    align-items: start;
}
.group-name {
    width: 100%;
    height: 24px;
    padding-bottom: 2px;
    justify-content: center;
    gap: 3px;
    background-color: #eceef0;
    border-top: 1px solid #c4c5c8;
}
.operations { width: 143px; }
.getdata { width: 139px; }
.datum { width: 207px; }
.shapes { width: 142px; }
.engineering { width: 157px; }
.editing { width: 242px; }
.surfaces { width: 135px; }
.intent { width: 79px; }
.rest { flex: 1; border: 0; }
.operations .group-body { grid-template-columns: 69px 1fr; }
.getdata .group-body { padding-left: 5px; }
.datum .group-body { grid-template-columns: 44px 1fr 48px; }
.shapes .group-body { grid-template-columns: 50px 1fr; }
.engineering .group-body { grid-template-columns: 83px 1fr; padding-left: 5px; }
.editing .group-body { grid-template-columns: 47px 58px 70px 1fr; }
.surfaces .group-body { grid-template-columns: 60px 1fr; }

.big {
    flex-direction: column;
    padding-top: 6px;
    justify-self: center;
}
.big svg {
    width: 32px;
    height: 32px;
    margin-bottom: 6px;
}
.big .caret {
    margin-top: 6px;
}
.cmds {
    padding: 1px 0 0 2px;
}
.cmds button {
    height: 25px;
    gap: 4px;
    white-space: nowrap;
}
.cmds .caret {
    margin-left: 3px;
}

/* workspace */
.workspace {
    flex: 1;
    display: flex;
    min-height: 0;
}
.navigator {
    width: 208px;
    margin: 14px 0 11px 4px;
    display: flex;
    flex-direction: column;
}
.nav-tabs {
    display: flex;
}
.nav-tabs button {
    width: 30px;
    height: 28px;
    justify-content: center;
    background-color: #eceef0;
    border: 1px solid #c4c5c8;
    border-width: 1px 1px 0 0;
}
.nav-tabs .active {
    height: 29px;
    margin-bottom: -1px;
    border-left-width: 1px;
    background-color: #fafafd;
    z-index: 1;
}
.nav-tabs svg,
.panel-head svg {
    width: 20px;
    height: 20px;
}
.panel {
    flex: 1;
    border: 1px solid #c4c5c8;
    border-right-width: 3px;
    border-bottom-width: 2px;
}
.panel-head {
    display: flex;
    align-items: center;
    gap: 9px;
    height: 29px;
    padding-left: 20px;
    border-bottom: 1px solid #c4c5c8;
}
.panel-head button {
    gap: 7px;
}
.panel-head h2 {
    margin: 0;
    font-size: 12px;
    color: #444;
}
.tree {
    list-style: none;
    margin: 6px 0 0;
    padding: 0;
    color: #444;
}
.tree li {
    display: flex;
    align-items: center;
    gap: 3px;
    height: 20px;
    padding-left: 30px;
}
.tree .root {
    padding-left: 10px;
}
.tree .hidden {
    color: #bbb;
}
.tree .parent {
    padding-left: 17px;
}
.parent::before {
    content: "";
    border: 4px solid transparent;
    border-left: 7px solid #888;
    border-right: 0;
    margin-right: 3px;
}

.viewport {
    flex: 1;
    padding-top: 7px;
}
.view-tools {
    display: flex;
    width: 311px;
    height: 28px;
    margin-left: 420px;
    border: 1px solid #c4c5c8;
    padding: 0 4px;
    background-color: #e6e7ea;
}
.view-tools button {
    flex: 1;
    justify-content: center;
    position: relative;
    background-color: #fdfdff;
    border-left: 1px solid #d0d1d4;
}
.view-tools svg {
    width: 18px;
    height: 18px;
}
.view-tools .pressed {
    background-color: #d6d7da;
    border: 1px solid #999;
}
.view-tools .more::after {
    content: "";
    position: absolute;
    right: 1px;
    bottom: 3px;
    border: 2px solid #555;
    border-top-color: transparent;
    border-left-color: transparent;
}
svg.part {
    display: block;
    width: 340px;
    height: 470px;
    margin-left: 328px;
    fill: #000;
}

.status {
    display: flex;
    justify-content: flex-end;
    flex: none;
    height: 6px;
    padding-right: 163px;
    background-color: #eeeef0;
    border-top: 2px solid #98999d;
}
.status span {
    width: 38px;
    border-left: 1px solid #d2d3d6;
}
```
